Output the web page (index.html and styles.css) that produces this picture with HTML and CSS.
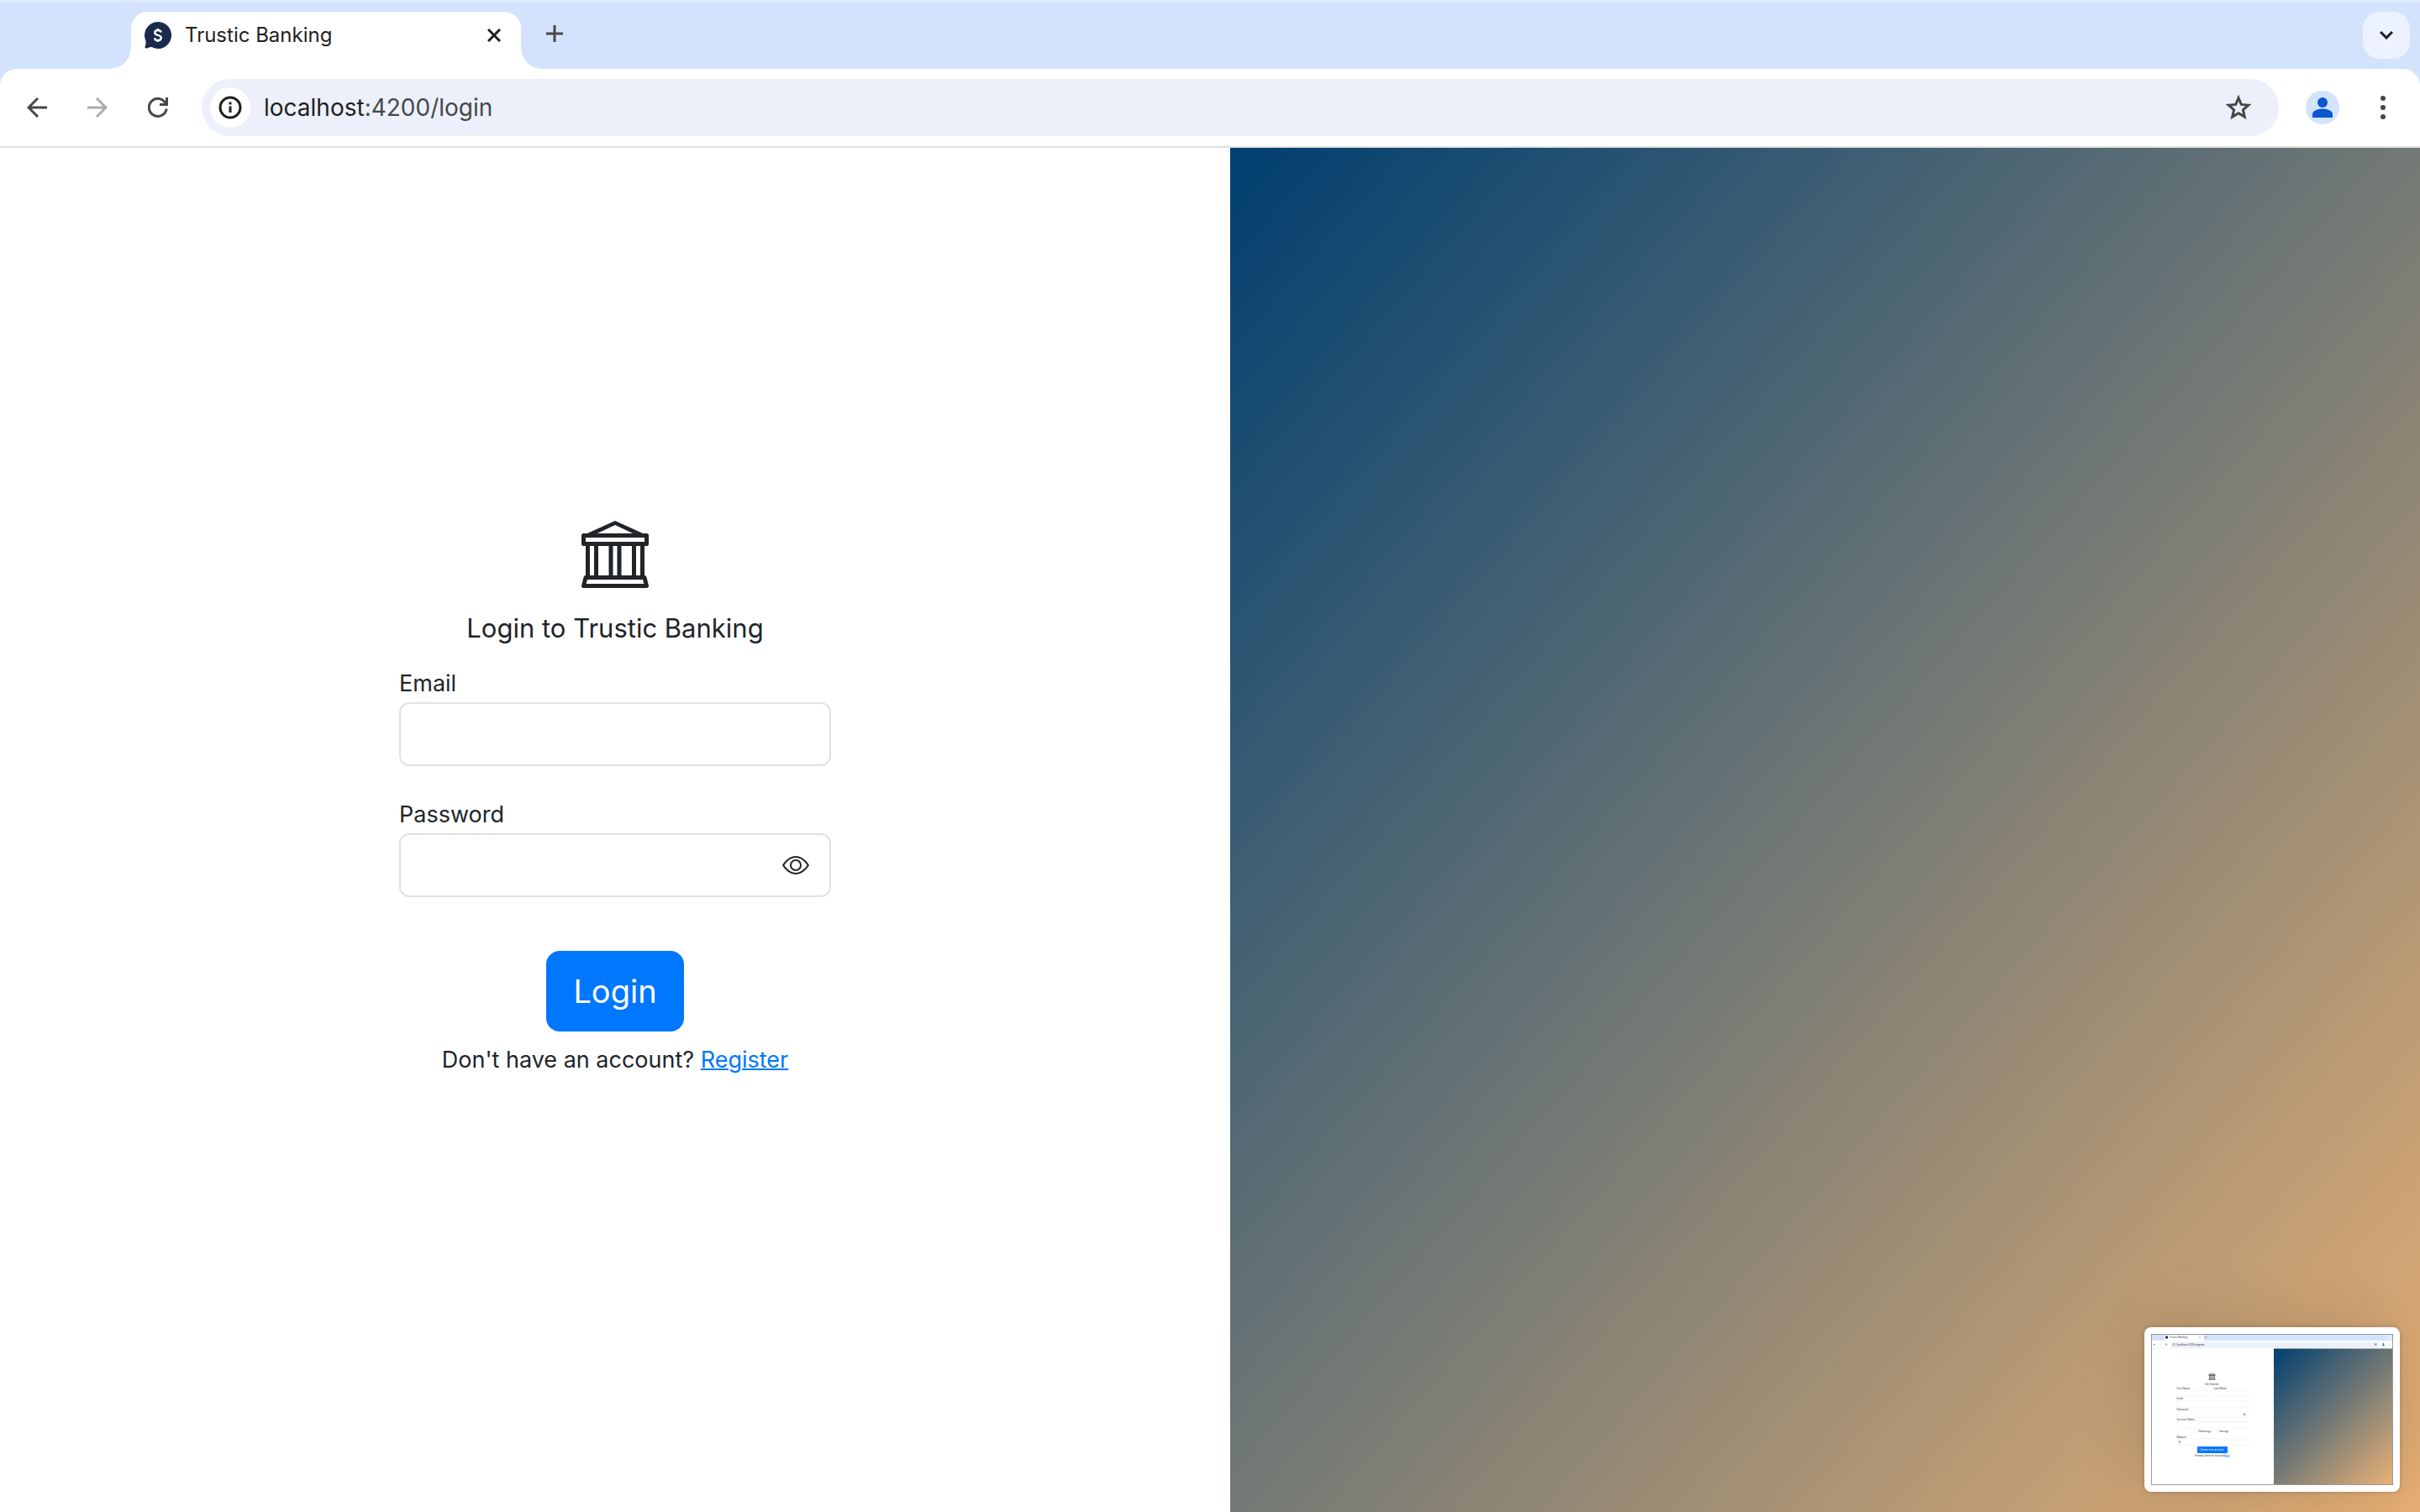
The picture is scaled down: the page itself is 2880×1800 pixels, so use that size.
FILE: index.html
```html
<!DOCTYPE html>
<html lang="en">
<head>
<meta charset="utf-8">
<title>Trustic Banking</title>
<link rel="stylesheet" href="styles.css">
</head>
<body>
<div class="browser">
  <header class="tabstrip">
    <div class="tab">
      <svg class="favicon" viewBox="0 0 32 32" aria-hidden="true"><path d="M16 0a16 16 0 1 1-7.500 30.100Q6 29.500 3 31.500 0 32 .6 29.500 2 26 1.500 22.800A16 16 0 0 1 16 0z" fill="#1a2a4c"/><path d="M19.700 12.600C19.300 10.800 18 10 16 10c-2.200 0-3.700 1.100-3.700 2.900 0 4.200 7.500 1.900 7.500 6.200 0 1.900-1.600 3-3.800 3s-3.700-1-4-2.900M16 8v2.500M16 21.800V24" fill="none" stroke="#fff" stroke-width="2.400"/></svg>
      <span class="tab-title">Trustic Banking</span>
      <button class="icon-button tab-close" aria-label="Close tab"><svg viewBox="0 0 16 16" width="16" height="16"><path d="M1 1l14 14M15 1L1 15" stroke="#1f1f1f" stroke-width="3" fill="none"/></svg></button>
    </div>
    <button class="icon-button new-tab" aria-label="New tab"><svg viewBox="0 0 20 20" width="20" height="20"><path d="M10 0v20M0 10h20" stroke="#474747" stroke-width="3" fill="none"/></svg></button>
    <button class="icon-button tab-search" aria-label="Search tabs"><svg viewBox="0 0 16 10" width="16" height="10"><path d="M1 1l7 7 7-7" stroke="#1f1f1f" stroke-width="3" fill="none"/></svg></button>
  </header>
  <nav class="toolbar">
    <button class="icon-button nav-button" aria-label="Back"><svg viewBox="0 0 24 24" width="24" height="24"><path d="M24 12H2M13 1L2 12l11 11" stroke="#474747" stroke-width="3" fill="none"/></svg></button>
    <button class="icon-button nav-button" aria-label="Forward" disabled><svg viewBox="0 0 24 24" width="24" height="24"><path d="M0 12h22M11 1l11 11-11 11" stroke="#acacac" stroke-width="3" fill="none"/></svg></button>
    <button class="icon-button nav-button" aria-label="Reload"><svg viewBox="0 0 24 24" width="24" height="24"><path d="M22.200 13.500A10.500 10.500 0 1 1 19.500 4.700L22 7.500M22.500 0v8.500H14" stroke="#474747" stroke-width="3" fill="none"/></svg></button>
    <div class="address">
      <button class="icon-button site-info" aria-label="View site information"><svg viewBox="0 0 28 28" width="28" height="28"><circle cx="14" cy="14" r="12" fill="none" stroke="#1f1f1f" stroke-width="3"/><path d="M14 12.500V20M14 7.500v3" stroke="#1f1f1f" stroke-width="3"/></svg></button>
      <span class="url"><span class="host">localhost</span>:4200/login</span>
      <button class="icon-button bookmark" aria-label="Bookmark this tab"><svg viewBox="0 0 32 30" width="32" height="30"><path fill="none" stroke="#474747" stroke-width="3" d="M16 3.500l3.300 7.900 8.500.8-6.400 5.600 1.900 8.300-7.300-4.400-7.300 4.400 1.900-8.300-6.400-5.600 8.500-.8z"/></svg></button>
    </div>
    <button class="icon-button profile" aria-label="Profile"><svg viewBox="0 0 24 24" width="24" height="24"><circle cx="12" cy="6" r="6" fill="#0b57d0"/><path d="M0 24v-4c0-4 6-6.500 12-6.500S24 16 24 20v4z" fill="#0b57d0"/></svg></button>
    <button class="icon-button menu" aria-label="Menu"><svg viewBox="0 0 6 28" width="6" height="28"><g fill="#474747"><circle cx="3" cy="3" r="3"/><circle cx="3" cy="14" r="3"/><circle cx="3" cy="25" r="3"/></g></svg></button>
  </nav>
  <main class="page">
    <section class="login-side">
      <form class="login-form">
        <svg class="bank" viewBox="0 0 16 16" fill="#212529" aria-hidden="true"><path id="bank-shape" d="m8 0 6.610 3h.89a.5.5 0 0 1 .5.5v2a.5.5 0 0 1-.5.5H15v7a.5.5 0 0 1 .485.380l.5 2a.498.498 0 0 1-.485.620H.5a.498.498 0 0 1-.485-.620l.5-2A.5.5 0 0 1 1 13V6H.5a.5.5 0 0 1-.5-.5v-2A.5.5 0 0 1 .5 3h.89zM3.777 3h8.447L8 1zM2 6v7h1V6zm2 0v7h2.500V6zm3.500 0v7h1V6zm2 0v7H12V6zM13 6v7h1V6zm2-1V4H1v1zm-.390 9H1.390l-.25 1h13.720z"/></svg>
        <h1 class="heading">Login to Trustic Banking</h1>
        <div class="field">
          <label for="email">Email</label>
          <input id="email" class="control" type="email">
        </div>
        <div class="field">
          <label for="password">Password</label>
          <div class="control password-box">
            <input id="password" class="password-input" type="password">
            <button type="button" class="icon-button" aria-label="Show password"><svg viewBox="0 0 16 16" width="32" height="32" fill="#212529"><path id="eye-shape" d="M16 8s-3-5.500-8-5.500S0 8 0 8s3 5.500 8 5.500S16 8 16 8M1.173 8a13 13 0 0 1 1.660-2.043C4.120 4.668 5.880 3.500 8 3.500s3.879 1.168 5.168 2.457A13 13 0 0 1 14.828 8q-.086.13-.195.288c-.335.48-.83 1.120-1.465 1.755C11.879 11.332 10.119 12.500 8 12.500s-3.879-1.168-5.168-2.457A13 13 0 0 1 1.172 8zM8 5.500a2.500 2.500 0 1 0 0 5 2.500 2.500 0 0 0 0-5M4.500 8a3.500 3.500 0 1 1 7 0 3.500 3.500 0 0 1-7 0"/></svg></button>
          </div>
        </div>
        <button type="submit" class="submit">Login</button>
        <p class="signup">Don't have an account? <a href="#register">Register</a></p>
      </form>
    </section>
    <aside class="art"></aside>
  </main>
</div>
<div class="preview">
  <svg class="preview-shot" viewBox="0 0 288 180" role="img" aria-label="Register page">
    <defs>
      <linearGradient id="sunset" gradientUnits="userSpaceOnUse" x1="142" y1="22" x2="294" y2="174"><stop offset="0" stop-color="#003f70"/><stop offset=".5" stop-color="#737975"/><stop offset="1" stop-color="#ebb277"/></linearGradient>
    </defs>
    <rect width="288" height="180" fill="#fff"/>
    <path d="M0 0h288v8H64a2 2 0 0 1-2-2V3.500a2 2 0 0 0-2-2H18a2 2 0 0 0-2 2V6a2 2 0 0 1-2 2H0z" fill="#d3e3fd"/>
    <rect x="281" y="1.500" width="5" height="5" rx="2" fill="#ecf3fe"/>
    <circle cx="18.500" cy="4" r="1.700" fill="#1a2a4c"/>
    <rect x="24" y="9.400" width="247" height="6.800" rx="3.400" fill="#ecf0fa"/>
    <path d="M0 17h288" stroke="#d8d8d8" stroke-width=".4"/>
    <g fill="none" stroke="#474747" stroke-width=".4">
      <path d="M57.500 3.300l1.400 1.400M58.900 3.300l-1.400 1.400M64.500 4h2M65.500 3v2M282.800 3.700l.7.7.7-.7M5 12.700H3M4 11.600l-1 1.100 1 1.100M266.500 11.300l1.500 2.500M268 11.300l-1.500 2.500M265.700 12.300h3"/>
      <path d="M10 12.700h2" stroke="#acacac"/><circle cx="18" cy="12.700" r="1.100"/><circle cx="27" cy="12.700" r="1.200"/><path d="M283.500 11.500v3" stroke-dasharray=".6 .5"/>
    </g>
    <path d="M275 14a1.500 1.500 0 0 1 3 0zM275.800 11.800a.7.7 0 1 1 1.400 0 .7.7 0 0 1-1.400 0z" fill="#0b57d0"/>
    <path d="M146 17.500h142V180H146z" fill="url(#sunset)"/>
    <use href="#bank-shape" transform="translate(68.500 46.500) scale(.5)" fill="#212529"/>
    <g fill="#fff" stroke="#e6e9ec" stroke-width=".5">
      <rect x="31" y="67" width="40" height="7.500" rx=".8"/><rect x="75" y="67" width="40" height="7.500" rx=".8"/><rect x="31" y="79.500" width="84" height="7.500" rx=".8"/><rect x="31" y="92" width="84" height="7.500" rx=".8"/><rect x="31" y="104.500" width="84" height="7.500" rx=".8"/><rect x="31" y="124.800" width="84" height="7.500" rx=".8"/><circle cx="53.500" cy="116" r="1.200"/><circle cx="78.500" cy="116" r="1.200"/>
    </g>
    <use href="#eye-shape" transform="translate(109 93.800) scale(.24)" fill="#212529"/>
    <rect x="55" y="134" width="36" height="8" rx=".8" fill="#0077ff"/>
    <g class="mini-text">
      <text x="21.500" y="5">Trustic Banking</text><text x="30.500" y="13.700">localhost:4200/register</text>
      <text x="64" y="61">Get Started</text><text x="30.500" y="65.800">First Name</text><text x="74.500" y="65.800">Last Name</text><text x="30.500" y="78.200">Email</text><text x="30.500" y="90.700">Password</text><text x="30.500" y="103.200">Account Name</text><text x="56" y="117">Chequings</text><text x="81" y="117">Savings</text><text x="30.500" y="123.500">Balance</text><text x="33" y="129.500">$</text><text x="58" y="139" class="mini-light">Create new account</text><text x="52" y="145.500">Already have an account?</text><text x="86" y="145.500" class="mini-link">Login</text>
    </g>
  </svg>
</div>
</body>
</html>
```
FILE: styles.css
```css
* { box-sizing: border-box; }
body { margin: 0; font-family: Inter, "Liberation Sans", sans-serif; color: #212529; background: #fff; }
button, input { font: inherit; }
.icon-button { display: flex; align-items: center; justify-content: center; padding: 0; border: 0; background: none; }
.icon-button svg { display: block; }
.browser { min-height: 100vh; display: flex; flex-direction: column; }

.tabstrip { display: flex; height: 82px; padding: 12px 12px 0 156px; background: #d3e3fd; border-top: 2px solid #e1ebfb; }
.tab { position: relative; display: flex; align-items: center; width: 464px; height: 68px; padding: 0 24px 12px 16px; background: #fff; border-radius: 20px 20px 0 0; }
.tab::before, .tab::after { content: ""; position: absolute; bottom: 0; width: 24px; height: 24px; }
.tab::before { right: 100%; background: radial-gradient(circle at 0 0, transparent 23px, #fff 24px); }
.tab::after { left: 100%; background: radial-gradient(circle at 100% 0, transparent 23px, #fff 24px); }
.favicon { width: 32px; height: 32px; margin-right: 16px; }
.tab-title { flex: 1; font-size: 24px; line-height: 32px; color: #1f1f1f; }
.new-tab { width: 40px; height: 52px; margin-left: 20px; }
.tab-search { width: 56px; height: 56px; margin-left: auto; border-radius: 20px; background: #ecf3fe; }

.toolbar { position: relative; display: flex; align-items: center; height: 94px; padding: 0 32px 0 20px; background: linear-gradient(#d3e3fd 20px, #fff 20px); border-bottom: 2px solid #e0e0e0; }
.toolbar::before { content: ""; position: absolute; inset: 0; background: #fff; border-radius: 20px 20px 0 0; }
.toolbar > * { position: relative; }
.nav-button { width: 48px; height: 48px; margin-right: 24px; }
.address { flex: 1; display: flex; align-items: center; height: 68px; margin-left: 4px; padding: 0 32px 0 10px; border-radius: 34px; background: #ecf0fa; }
.site-info { width: 48px; height: 48px; border-radius: 50%; background: #fff; }
.url { flex: 1; margin-left: 16px; font-size: 28px; line-height: 40px; color: #474747; }
.host { color: #1f1f1f; }
.profile { width: 40px; height: 40px; margin: 0 40px 0 32px; border-radius: 50%; background: #d3e3fd; }
.menu { width: 24px; height: 40px; }

.page { flex: 1; display: grid; grid-template-columns: 1464fr 1416fr; }
.login-side { display: flex; align-items: center; justify-content: center; }
.login-form { display: flex; flex-direction: column; align-items: center; width: 514px; padding-bottom: 74px; }
.bank { width: 80px; height: 80px; }
.heading { margin: 28px 0 26px; font-size: 31px; font-weight: 400; line-height: 40px; white-space: nowrap; }
.field { width: 100%; margin-bottom: 38px; font-size: 27px; line-height: 40px; }
.field label { display: block; margin-bottom: 2px; }
.control { display: flex; align-items: center; width: 100%; height: 76px; padding: 0 24px; border: 2px solid #dee2e6; border-radius: 12px; background: #fff; }
.password-input { flex: 1; min-width: 0; height: 60px; border: 0; outline: 0; }
.submit { margin-top: 26px; height: 96px; padding: 0 32px; border: 0; border-radius: 16px; background: #0077ff; color: #fff; font-size: 38px; line-height: 48px; }
.signup { margin: 14px 0 0; font-size: 27px; line-height: 40px; white-space: nowrap; }
.signup a { color: #0077ff; text-decoration-thickness: 2px; }
.art { background: linear-gradient(to bottom right, #003f70, #737975 50%, #e8b074); }

.preview { position: fixed; right: 24px; bottom: 24px; width: 304px; padding: 8px; border-radius: 8px; background: #fff; box-shadow: 0 0 6px rgba(0, 0, 0, .2), 0 0 80px rgba(0, 0, 0, .14); }
.preview-shot { display: block; width: 100%; outline: 1px solid #9a9a9a; outline-offset: -1px; }
.mini-text { font-size: 3px; fill: #333; }
.mini-light { fill: #fff; }
.mini-link { fill: #0077ff; text-decoration: underline; }
```
